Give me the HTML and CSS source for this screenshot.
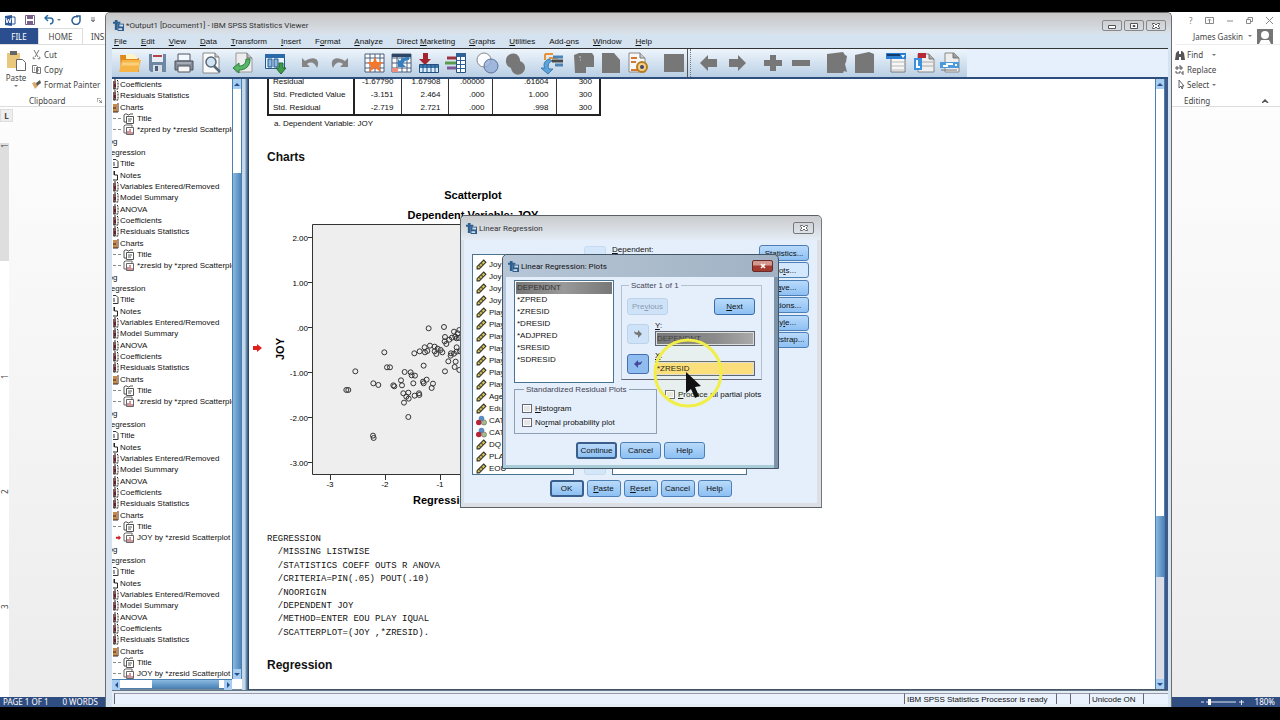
FILE: index.html
```html
<!DOCTYPE html>
<html lang="en">
<head>
<meta charset="utf-8">
<title>Output1 - IBM SPSS Statistics Viewer</title>
<link rel="stylesheet" href="styles.css">
</head>
<body>
<svg class="defs" aria-hidden="true">
  <defs>
    <symbol id="spss" viewBox="0 0 12 12"><path d="M2 0h3v2h3v2H5v7H2V4H0V2h2z" fill="#2d5f8f"/><path d="M5 4h7v8H5z" fill="#2f5b88"/><path d="M7 5h4v2H7zM6 9h4v2H6z" fill="#c9dcee"/></symbol>
    <symbol id="book" viewBox="0 0 6 11"><path d="M0 2h3v8H0z" fill="#7d5a58"/><path d="M1 1h3l1 1v8H0" fill="none" stroke="#222" stroke-dasharray="2 1"/><path d="M1 5h2v3H1z" fill="#5b2430"/></symbol>
    <symbol id="folder" viewBox="0 0 6 11"><path d="M0 2h4v8H0z" fill="#c98a48"/><path d="M0 10h5V1M0 6h3" fill="none" stroke="#3c2414"/></symbol>
    <symbol id="page" viewBox="0 0 6 11"><path d="M0 1.500h3l2 2v6H0M0 5h2M0 7h2" fill="none" stroke="#333"/></symbol>
    <symbol id="note" viewBox="0 0 6 11"><path d="M1.500 1v4h3v5H0M0 1v4" fill="none" stroke="#222"/></symbol>
    <symbol id="ctitle" viewBox="0 0 12 11"><path d="M3 9H1V2l1-1h2l1 1h1l1-1h3M3.500 3.500h7v7h-7zM5 6h4M5 8h3" fill="none" stroke="#555"/></symbol>
    <symbol id="cplot" viewBox="0 0 12 11"><path d="M3 9H1V2l1-1h7v2M3.500 3.500h7v7h-7z" fill="none" stroke="#666"/><path d="M5 10V7M7 10V5M9 10V8" stroke="#a02838"/></symbol>
    <symbol id="redarrow" viewBox="0 0 10 8"><path d="M0 2h4V0l5 4-5 4V6H0z" fill="#e0201c"/></symbol>
    <symbol id="rule" viewBox="0 0 10 10"><path d="M1 7l6-6 2 2-6 6H1z" fill="#d6c65c" stroke="#35342a"/><path d="M3 6l1 1M5 4l1 1" stroke="#333"/></symbol>
    <symbol id="balls" viewBox="0 0 11 10"><circle cx="5.500" cy="3" r="2.800" fill="#5b8fc4"/><circle cx="2.800" cy="7" r="2.800" fill="#b8233a"/><circle cx="8" cy="7" r="2.600" fill="#a8b98c" stroke="#555" stroke-width=".5"/></symbol>

    <symbol id="t-open" viewBox="0 0 24 24"><path d="M2 4h8l2 3h9v14H3z" fill="#e08a1e"/><path d="M8 3h8l4 5H8z" fill="#fff3c8"/><path d="M1 21L4 9h19l-3 12z" fill="#f7b548"/><path d="M4 13h17" stroke="#fbd07c" stroke-width="3"/></symbol>
    <symbol id="t-save" viewBox="0 0 24 24"><path d="M4 3h17v18H6l-2-2z" fill="#6d87a5"/><path d="M7 3h11v8H7z" fill="#e8eef5"/><path d="M8 5h9" stroke="#b6434a" stroke-width="2"/><path d="M8 14h9v7H8z" fill="#d8dde2"/><path d="M10 15h3v5h-3z" fill="#46617f"/></symbol>
    <symbol id="t-print" viewBox="0 0 24 24"><path d="M6 3h12v7H6z" fill="#f2f8ff" stroke="#556"/><path d="M3 10h18v9H3z" fill="#848d99" stroke="#4b535e"/><path d="M6 15h12v6H6z" fill="#f4f6f8" stroke="#555"/><path d="M5 12h14" stroke="#c3cad2"/></symbol>
    <symbol id="t-preview" viewBox="0 0 24 24"><path d="M4 2h12l4 4v16H4z" fill="#fbfbfb" stroke="#8a8a8a"/><path d="M16 2v4h4" fill="#ccc" stroke="#777"/><circle cx="12" cy="11" r="5" fill="#cfe3f3" stroke="#57687a" stroke-width="1.500"/><path d="M15 15l6 6" stroke="#57687a" stroke-width="2.500"/></symbol>
    <symbol id="t-export" viewBox="0 0 24 24"><path d="M5 2h11l5 5v14H5z" fill="#ededed" stroke="#999"/><path d="M16 2v5h5" fill="#bbb" stroke="#777"/><path d="M15 8c0 5-3 7-7 7v-3l-6 5 6 5v-3c7 0 11-4 11-11z" fill="#58b765" stroke="#2c7a3c"/></symbol>
    <symbol id="t-recall" viewBox="0 0 24 24"><path d="M2.500 3.500h19v14h-19z" fill="#e9f3fb" stroke="#23598c"/><path d="M2 3h20v4H2z" fill="#2a6aa8"/><path d="M5 8h4v8H5zM11 8h4v8h-4z" fill="#8db7dd" stroke="#23598c"/><path d="M16 12h4v5h3l-5 6-5-6h3z" fill="#3f9b4b" stroke="#236a2e"/></symbol>
    <symbol id="t-undo" viewBox="0 0 24 24"><path d="M3 7v9h8l-3-3c4-3 8-1 10 4 4-9-3-13-12-7z" fill="#858585"/></symbol>
    <symbol id="t-redo" viewBox="0 0 24 24"><path d="M21 7v9h-8l3-3c-4-3-8-1-10 4-4-9 3-13 12-7z" fill="#858585"/></symbol>
    <symbol id="t-star" viewBox="0 0 24 24"><path d="M2 3h19v18H2z" fill="#fff"/><path d="M2 3h19v18H2zM2 7h19M2 12h19M2 17h19M7 3v18M12 3v18M17 3v18" fill="none" stroke="#4b5e7c"/><path d="M12 6l2 5h6l-4 4 2 6-6-4-6 4 2-6-4-4h6z" fill="#f4772c"/></symbol>
    <symbol id="t-goto" viewBox="0 0 24 24"><path d="M2 3h19v18H2z" fill="#fff"/><path d="M2 3h19v18H2zM2 7h19M2 12h19M2 17h19M7 3v18M12 3v18M17 3v18" fill="none" stroke="#4b5e7c"/><path d="M2 3h19v3H2z" fill="#2d4566"/><path d="M19 6c-6 0-8 2-9 4L8 8v8h8l-3-3c1-3 3-4 6-4z" fill="#347fc0"/><path d="M2 17h6v4H2z" fill="#f08c7a"/></symbol>
    <symbol id="t-var" viewBox="0 0 24 24"><path d="M6 2h5v6h3l-6 6-6-6h4z" fill="#a3242f"/><path d="M2.500 13.500h19v8h-19z" fill="#d8edff" stroke="#234f7c"/><path d="M3 14h18v3H3z" fill="#3c78b2"/><path d="M6 14v8M10 14v8M14 14v8M18 14v8" stroke="#234f7c"/></symbol>
    <symbol id="t-vars" viewBox="0 0 24 24"><path d="M12.500 2.500h9v19h-9z" fill="#fff" stroke="#234f7c"/><path d="M12 2h10v4H12zM12 9h10v1H12zM12 13h10v1H12zM12 17h10v1H12zM16 2h1v20h-1z" fill="#2f6299"/><path d="M3 7h9" stroke="#9b3540" stroke-width="3"/><path d="M1 12h11" stroke="#5d9b4c" stroke-width="3"/><path d="M3 17h9" stroke="#7e5a94" stroke-width="3"/></symbol>
    <symbol id="t-venn" viewBox="0 0 24 24"><circle cx="8" cy="9" r="7" fill="#fafcff" stroke="#888"/><circle cx="15" cy="15" r="7" fill="#93add8" fill-opacity=".8" stroke="#5b739c"/></symbol>
    <symbol id="t-venng" viewBox="0 0 24 24"><path d="M2 9a7 7 0 0 1 13-3 7 7 0 0 1 1 4 7 7 0 1 1-9 7 7 7 0 0 1-5-8z" fill="#777"/></symbol>
    <symbol id="t-split" viewBox="0 0 24 24"><path d="M5 3h8M5 3v6M9 7h9" stroke="#e69336" stroke-width="2" fill="none"/><path d="M13 6h10M15 14h8" stroke="#4c83b7" stroke-width="3"/><path d="M12 10h11" stroke="#4a4a4a" stroke-width="3"/><path d="M9 8c-5 2-6 6-4 9H1l7 6 5-5H9c-2-4 0-7 3-8z" fill="#5ba3da" stroke="#3a7ab0"/></symbol>
    <symbol id="t-g1" viewBox="0 0 24 24"><path d="M2 4l5-2h13l2 3v11h-8v6H3z" fill="#777"/><path d="M7 6h2M8 9h1" stroke="#ccc"/></symbol>
    <symbol id="t-g2" viewBox="0 0 24 24"><path d="M3 2h12l6 7v13H3z" fill="#777"/></symbol>
    <symbol id="t-run" viewBox="0 0 24 24"><path d="M3 2h11l5 5v14H3z" fill="#f7f7f7" stroke="#888"/><path d="M14 2v5h5" fill="#ccc" stroke="#777"/><path d="M5 7h6M5 11h5M5 19h8" stroke="#d57734" stroke-width="2"/><circle cx="16" cy="16" r="5" fill="#f4d28a" stroke="#b87a1e" stroke-width="2"/><circle cx="16" cy="16" r="2" fill="#446"/></symbol>
    <symbol id="t-g3" viewBox="0 0 24 24"><path d="M2 3h20v18H2z" fill="#777"/></symbol>
    <symbol id="t-left" viewBox="0 0 24 24"><path d="M3 12l8-8v4h9v8h-9v4z" fill="#777"/></symbol>
    <symbol id="t-right" viewBox="0 0 24 24"><path d="M21 12l-8-8v4H4v8h9v4z" fill="#777"/></symbol>
    <symbol id="t-plus" viewBox="0 0 24 24"><path d="M9 4h6v5h6v6h-6v5H9v-5H3V9h6z" fill="#777"/></symbol>
    <symbol id="t-minus" viewBox="0 0 24 24"><path d="M3 9h18v6H3z" fill="#777"/></symbol>
    <symbol id="t-g4" viewBox="0 0 24 24"><path d="M2 3l16-2 2 3 2 1-1 6-1 2 2 8-3-1-1 2H2z" fill="#777"/></symbol>
    <symbol id="t-g5" viewBox="0 0 24 24"><path d="M2 4l14-3 5 2v19H2z" fill="#777"/></symbol>
    <symbol id="t-head" viewBox="0 0 24 24"><path d="M6 7h14v14H6z" fill="#f6f6f6" stroke="#777"/><path d="M7 11h13M7 15h13M7 19h13" stroke="#bbb"/><path d="M1 2h20v6H1z" fill="#2a7fd0"/><path d="M2 4h13" stroke="#123a6b" stroke-width="2"/><path d="M16 4h4l-2 3z" fill="#fff"/></symbol>
    <symbol id="t-rep" viewBox="0 0 24 24"><path d="M6 3h11l5 5v13H6z" fill="#efefef" stroke="#888"/><path d="M6 2h8v5H6z" fill="#b92836"/><path d="M17 3v5h5" fill="#aaa" stroke="#777"/><path d="M10 11h11M10 15h11" stroke="#aaa"/><path d="M2 7h8v12H2z" fill="#3c90dc"/><path d="M5 9v7h3" stroke="#fff" fill="none" stroke-width="2"/></symbol>
    <symbol id="t-pic" viewBox="0 0 24 24"><path d="M6 2h9l5 5v14H6z" fill="#eee" stroke="#888"/><path d="M14 2v5h6" fill="#999" stroke="#777"/><path d="M1 11h19v6H1z" fill="#4b9ade"/><path d="M4 15h4v-2h6M16 14h2" stroke="#fff" stroke-width="2" fill="none"/><path d="M2 19h16" stroke="#777"/></symbol>
  </defs>
</svg>

<main class="desktop">
  <!-- Word, behind everything -->
  <section class="word" aria-label="Word">
    <div class="word-top">
      <div class="word-left">
        <div class="quick">
          <svg width="11" height="11" viewBox="0 0 11 11"><path d="M0 1l7-1v11l-7-1z" fill="#2b579a"/><path d="M7 2h3v7H7" fill="#fff" stroke="#2b579a"/><path d="M1 3l1 5 1.500-4L5 8l1-5" fill="none" stroke="#fff"/></svg>
          <svg width="10" height="10" viewBox="0 0 10 10"><path d="M.5.5h9v9h-9z" fill="#fff" stroke="#77608a"/><path d="M2 1h6v3H2zM2 6h6v4H2z" fill="#77608a"/></svg>
          <svg width="18" height="10" viewBox="0 0 18 10"><path d="M4 0L1 3l3 3M1 3h5c4 0 4 5 0 6" fill="none" stroke="#2b6da8" stroke-width="1.500"/><path d="M13 4h4l-2 2z" fill="#777"/></svg>
          <svg width="10" height="10" viewBox="0 0 10 10"><path d="M7 2a4 4 0 1 0 2 3M5 1h4v4" fill="none" stroke="#2b5f94" stroke-width="1.500"/></svg>
          <svg width="6" height="6" viewBox="0 0 6 6"><path d="M1 1h4M1 3h4L3 5z" stroke="#888" fill="#888"/></svg>
        </div>
        <div class="tabs"><button class="tab file">FILE</button><button class="tab home">HOME</button><button class="tab insert">INSERT</button></div>
        <div class="ribbon">
          <div class="clip-row">
            <button class="paste"><svg width="20" height="21" viewBox="0 0 20 21"><path d="M1 3h13v15H1z" fill="#e9c77c"/><path d="M4 1h7v4H4z" fill="#666"/><path d="M10.500 9.500h6l3 3v8h-9z" fill="#fff" stroke="#666"/></svg><span>Paste</span><svg width="6" height="4" viewBox="0 0 6 4"><path d="M1 1h4L3 3z" fill="#777"/></svg></button>
            <div class="clip-list">
              <button><svg width="11" height="10" viewBox="0 0 11 10"><path d="M3 0l4 7M8 0L4 7M3 7a1 1 0 1 0 1 1M8 7a1 1 0 1 1-1 1" fill="none" stroke="#777"/></svg>Cut</button>
              <button><svg width="11" height="10" viewBox="0 0 11 10"><path d="M1.500.5h4l1 1v6h-5zM5.500 2.500h4v6h-4zM3 3h1M3 5h1M7 5h1" fill="none" stroke="#777"/></svg>Copy</button>
              <button><svg width="11" height="10" viewBox="0 0 11 10"><path d="M1 3l3-1 3 4-3 3z" fill="#d9a96a"/><path d="M5 3l4-3 1 3-4 3z" fill="#555"/></svg>Format Painter</button>
            </div>
          </div>
          <div class="group-name"><span>Clipboard</span><svg width="5" height="5" viewBox="0 0 5 5"><path d="M0 4V0h4M2 2l3 3M5 2v3H2" fill="none" stroke="#777"/></svg></div>
        </div>
      </div>
      <div class="word-right">
        <div class="win-tools">
          <span>?</span>
          <svg width="9" height="7" viewBox="0 0 9 7"><path d="M.5.5h8v6h-8zM4.500 6V2M3 3.500L4.500 2 6 3.500" fill="none" stroke="#888"/></svg>
          <svg width="7" height="7" viewBox="0 0 7 7"><path d="M0 4h6" stroke="#888"/></svg>
          <svg width="7" height="7" viewBox="0 0 7 7"><path d="M.5 2.500h4v4h-4zM2 2V.5h4.500v4H5" fill="none" stroke="#888"/></svg>
          <svg width="7" height="7" viewBox="0 0 7 7"><path d="M0 0l7 7M7 0L0 7" stroke="#888"/></svg>
        </div>
        <div class="user"><span>James Gaskin</span><svg width="6" height="4" viewBox="0 0 6 4"><path d="M1 1h4L3 3z" fill="#777"/></svg><svg width="16" height="15" viewBox="0 0 16 15"><path d="M0 0h16v15H0z" fill="#757575"/><circle cx="8" cy="6" r="4" fill="#fff"/><path d="M2 15l2-4h8l2 4z" fill="#fff"/></svg></div>
        <div class="editing">
          <button><svg width="10" height="9" viewBox="0 0 10 9"><path d="M1 2l2-2h1v9H0zM9 2L7 0H6v9h4zM4 3h2v3H4z" fill="#555"/></svg>Find<svg width="14" height="4" viewBox="0 0 14 4"><path d="M7 1h4L9 3z" fill="#777"/></svg></button>
          <button><svg width="10" height="10" viewBox="0 0 10 10"><path d="M1 4V2h2v2zM5 0v4h2V2H5M4 9V7h2M9 7H7v2h2M1 6v2h2" fill="none" stroke="#555"/></svg>Replace</button>
          <button><svg width="10" height="10" viewBox="0 0 10 10"><path d="M4 0v8l2-2 1 3 1-1-1-2h2z" fill="#fff" stroke="#666"/></svg>Select<svg width="6" height="4" viewBox="0 0 6 4"><path d="M1 1h4L3 3z" fill="#777"/></svg></button>
          <div class="group-name right"><span>Editing</span><svg width="7" height="4" viewBox="0 0 7 4"><path d="M0 4l3-3 3 3" fill="none" stroke="#555" stroke-width="1.500"/></svg></div>
        </div>
      </div>
    </div>
    <div class="word-body">
      <div class="tabstop">L</div>
      <div class="vruler"><span class="mark m1">1</span><span class="mark m2">1</span><span class="mark m3">2</span><span class="mark m4">3</span></div>
    </div>
    <div class="word-status"><span>PAGE 1 OF 1</span><span class="words">0 WORDS</span><span class="zoombar"><svg width="46" height="8" viewBox="0 0 46 8"><path d="M0 4h3M5 4h30M38 4h5M40.500 2v5" stroke="#dfe7f3"/><path d="M7 1h3v6H7z" fill="#fff"/></svg><span>180%</span></span></div>
  </section>

  <!-- Statistics viewer -->
  <section class="viewer" aria-label="IBM SPSS Statistics Viewer">
    <header class="titlebar">
      <svg width="11" height="11"><use href="#spss"/></svg><h1>*Output1 [Document1] - IBM SPSS Statistics Viewer</h1>
      <div class="winbtns">
        <button aria-label="Minimize"><svg width="8" height="6" viewBox="0 0 8 6"><path d="M.5 2.500h7v3h-7z" fill="#fff" stroke="#555"/></svg></button><button aria-label="Maximize"><svg width="8" height="6" viewBox="0 0 8 6"><path d="M.5.5h7v5h-7zM3 2.500h2v1H3z" fill="#fff" stroke="#555"/></svg></button><button aria-label="Close"><svg width="8" height="6" viewBox="0 0 8 6"><path d="M.5.5h2L4 2 5.500.5h2v1L6 3l1.500 1.500v1h-2L4 4 2.500 5.500h-2v-1L2 3 .5 1.500z" fill="#fff" stroke="#555"/></svg></button>
      </div>
    </header>
    <nav class="menubar">
      <button><u>F</u>ile</button><button><u>E</u>dit</button><button><u>V</u>iew</button><button><u>D</u>ata</button><button><u>T</u>ransform</button><button><u>I</u>nsert</button><button>F<u>o</u>rmat</button><button><u>A</u>nalyze</button><button>Direct <u>M</u>arketing</button><button><u>G</u>raphs</button><button><u>U</u>tilities</button><button>Add-<u>o</u>ns</button><button><u>W</u>indow</button><button><u>H</u>elp</button>
    </nav>
    <div class="toolbar">
      <div class="grp"><button aria-label="Open"><svg><use href="#t-open"/></svg></button><button aria-label="Save"><svg><use href="#t-save"/></svg></button><button aria-label="Print"><svg><use href="#t-print"/></svg></button><button aria-label="Preview"><svg><use href="#t-preview"/></svg></button></div>
      <div class="grp"><button aria-label="Export"><svg><use href="#t-export"/></svg></button></div>
      <div class="grp"><button aria-label="Recall"><svg><use href="#t-recall"/></svg></button></div>
      <div class="grp far pair"><button aria-label="Undo"><svg><use href="#t-undo"/></svg></button><button aria-label="Redo"><svg><use href="#t-redo"/></svg></button></div>
      <div class="grp far"><button aria-label="Go to data"><svg><use href="#t-star"/></svg></button><button aria-label="Go to case"><svg><use href="#t-goto"/></svg></button><button aria-label="Go to variable"><svg><use href="#t-var"/></svg></button><button aria-label="Variables"><svg><use href="#t-vars"/></svg></button></div>
      <div class="grp pair"><button aria-label="Use sets"><svg><use href="#t-venn"/></svg></button><button aria-label="Show all"><svg><use href="#t-venng"/></svg></button></div>
      <div class="grp far"><button aria-label="Select last output"><svg><use href="#t-split"/></svg></button></div>
      <div class="grp"><button aria-label="Designate window"><svg><use href="#t-g1"/></svg></button><button aria-label="Autoscript"><svg><use href="#t-g2"/></svg></button><button aria-label="Run script"><svg><use href="#t-run"/></svg></button></div>
      <div class="grp far"><button aria-label="Window"><svg><use href="#t-g3"/></svg></button></div>
      <div class="sep"></div>
      <div class="grp pair"><button aria-label="Promote"><svg><use href="#t-left"/></svg></button><button aria-label="Demote"><svg><use href="#t-right"/></svg></button></div>
      <div class="grp far pair"><button aria-label="Expand"><svg><use href="#t-plus"/></svg></button><button aria-label="Collapse"><svg><use href="#t-minus"/></svg></button></div>
      <div class="grp far pair"><button aria-label="Show"><svg><use href="#t-g4"/></svg></button><button aria-label="Hide"><svg><use href="#t-g5"/></svg></button></div>
      <div class="grp"><button aria-label="Insert heading"><svg><use href="#t-head"/></svg></button><button aria-label="Insert title"><svg><use href="#t-rep"/></svg></button><button aria-label="Insert text"><svg><use href="#t-pic"/></svg></button></div>
    </div>

    <div class="panes">
      <aside class="outline">
        <ul class="tree">
          <li><svg><use href="#book"/></svg>Coefficients</li>
          <li><svg><use href="#book"/></svg>Residuals Statistics</li>
          <li><svg><use href="#folder"/></svg>Charts</li>
          <li class="leaf"><svg><use href="#ctitle"/></svg>Title</li>
          <li class="leaf"><svg><use href="#cplot"/></svg>*zpred by *zresid Scatterplot</li>
          <li class="log">Log</li>
          <li class="reg">Regression</li>
          <li><svg><use href="#page"/></svg>Title</li>
          <li><svg><use href="#note"/></svg>Notes</li>
          <li><svg><use href="#book"/></svg>Variables Entered/Removed</li>
          <li><svg><use href="#book"/></svg>Model Summary</li>
          <li><svg><use href="#book"/></svg>ANOVA</li>
          <li><svg><use href="#book"/></svg>Coefficients</li>
          <li><svg><use href="#book"/></svg>Residuals Statistics</li>
          <li><svg><use href="#folder"/></svg>Charts</li>
          <li class="leaf"><svg><use href="#ctitle"/></svg>Title</li>
          <li class="leaf"><svg><use href="#cplot"/></svg>*zresid by *zpred Scatterplot</li>
          <li class="log">Log</li>
          <li class="reg">Regression</li>
          <li><svg><use href="#page"/></svg>Title</li>
          <li><svg><use href="#note"/></svg>Notes</li>
          <li><svg><use href="#book"/></svg>Variables Entered/Removed</li>
          <li><svg><use href="#book"/></svg>Model Summary</li>
          <li><svg><use href="#book"/></svg>ANOVA</li>
          <li><svg><use href="#book"/></svg>Coefficients</li>
          <li><svg><use href="#book"/></svg>Residuals Statistics</li>
          <li><svg><use href="#folder"/></svg>Charts</li>
          <li class="leaf"><svg><use href="#ctitle"/></svg>Title</li>
          <li class="leaf"><svg><use href="#cplot"/></svg>*zresid by *zpred Scatterplot</li>
          <li class="log">Log</li>
          <li class="reg">Regression</li>
          <li><svg><use href="#page"/></svg>Title</li>
          <li><svg><use href="#note"/></svg>Notes</li>
          <li><svg><use href="#book"/></svg>Variables Entered/Removed</li>
          <li><svg><use href="#book"/></svg>Model Summary</li>
          <li><svg><use href="#book"/></svg>ANOVA</li>
          <li><svg><use href="#book"/></svg>Coefficients</li>
          <li><svg><use href="#book"/></svg>Residuals Statistics</li>
          <li><svg><use href="#folder"/></svg>Charts</li>
          <li class="leaf"><svg><use href="#ctitle"/></svg>Title</li>
          <li class="leaf current"><svg><use href="#cplot"/></svg>JOY by *zresid Scatterplot</li>
          <li class="log">Log</li>
          <li class="reg">Regression</li>
          <li><svg><use href="#page"/></svg>Title</li>
          <li><svg><use href="#note"/></svg>Notes</li>
          <li><svg><use href="#book"/></svg>Variables Entered/Removed</li>
          <li><svg><use href="#book"/></svg>Model Summary</li>
          <li><svg><use href="#book"/></svg>ANOVA</li>
          <li><svg><use href="#book"/></svg>Coefficients</li>
          <li><svg><use href="#book"/></svg>Residuals Statistics</li>
          <li><svg><use href="#folder"/></svg>Charts</li>
          <li class="leaf"><svg><use href="#ctitle"/></svg>Title</li>
          <li class="leaf"><svg><use href="#cplot"/></svg>JOY by *zresid Scatterplot</li>
        </ul>
        <div class="vscroll"><button class="arrow up" aria-label="Up"></button><div class="vtrack a"></div><div class="vthumb a"></div><button class="arrow down" aria-label="Down"></button></div>
        <div class="hscroll"><button class="arrow left" aria-label="Left"></button><div class="htrack"></div><div class="hthumb"></div><div class="hend"></div><button class="arrow right" aria-label="Right"></button></div>
      </aside>
      <div class="splitter"></div>
      <article class="output">
        <div class="doc">
          <table class="stats">
            <tr><th>Residual</th><td class="c1">-1.67790</td><td class="c2">1.67908</td><td class="c3">.00000</td><td class="c4">.61604</td><td class="c3">300</td></tr>
            <tr><th>Std. Predicted Value</th><td>-3.151</td><td>2.464</td><td>.000</td><td>1.000</td><td>300</td></tr>
            <tr><th>Std. Residual</th><td>-2.719</td><td>2.721</td><td>.000</td><td>.998</td><td>300</td></tr>
          </table>
          <p class="foot">a. Dependent Variable: JOY</p>
          <h2>Charts</h2>
          <div class="chart">
            <svg class="here" width="10" height="8"><use href="#redarrow"/></svg>
            <svg class="plot" viewBox="267 185 413 325" width="413" height="325">
              <text class="ct" x="473" y="199">Scatterplot</text>
              <text class="ct" x="473" y="219">Dependent Variable: JOY</text>
              <path d="M312.500 224.500h330v250h-330z" fill="#eee" stroke="#333"/>
              <path d="M308 237.500h4M308 282.500h4M308 327.500h4M308 372.500h4M308 417.500h4M308 462.500h4M330.500 475v5M385.500 475v5M440.500 475v5" stroke="#333"/>
              <g class="tick y"><text x="308" y="241">2.00</text><text x="308" y="286">1.00</text><text x="308" y="331">.00</text><text x="308" y="376">-1.00</text><text x="308" y="421">-2.00</text><text x="308" y="466">-3.00</text></g>
              <g class="tick x"><text x="330" y="487">-3</text><text x="385" y="487">-2</text><text x="440" y="487">-1</text></g>
              <text class="ct" transform="translate(284 349) rotate(-90)">JOY</text>
              <text class="cl" x="413" y="504">Regression Standardized</text>
              <g class="pts" transform="translate(255 180) scale(.3333)">
                <circle cx="521" cy="445"/><circle cx="567" cy="441"/><circle cx="388" cy="517"/><circle cx="301" cy="574"/><circle cx="396" cy="562"/><circle cx="405" cy="562"/><circle cx="355" cy="610"/><circle cx="370" cy="615"/><circle cx="274" cy="630"/><circle cx="280" cy="630"/><circle cx="415" cy="616"/><circle cx="418" cy="619"/><circle cx="438" cy="601"/><circle cx="441" cy="616"/><circle cx="449" cy="576"/><circle cx="467" cy="577"/><circle cx="470" cy="586"/><circle cx="480" cy="587"/><circle cx="475" cy="610"/><circle cx="506" cy="557"/><circle cx="478" cy="520"/><circle cx="494" cy="514"/><circle cx="509" cy="502"/><circle cx="510" cy="517"/><circle cx="517" cy="513"/><circle cx="525" cy="497"/><circle cx="539" cy="500"/><circle cx="548" cy="506"/><circle cx="557" cy="510"/><circle cx="539" cy="514"/><circle cx="544" cy="522"/><circle cx="562" cy="517"/><circle cx="445" cy="640"/><circle cx="460" cy="638"/><circle cx="454" cy="650"/><circle cx="461" cy="656"/><circle cx="447" cy="668"/><circle cx="479" cy="647"/><circle cx="492" cy="640"/><circle cx="493" cy="645"/><circle cx="504" cy="605"/><circle cx="506" cy="610"/><circle cx="515" cy="599"/><circle cx="534" cy="611"/><circle cx="530" cy="624"/><circle cx="460" cy="711"/><circle cx="354" cy="767"/><circle cx="356" cy="774"/><circle cx="570" cy="471"/><circle cx="569" cy="484"/><circle cx="574" cy="492"/><circle cx="583" cy="479"/><circle cx="591" cy="473"/><circle cx="597" cy="455"/><circle cx="601" cy="470"/><circle cx="608" cy="460"/><circle cx="613" cy="450"/><circle cx="605" cy="475"/><circle cx="611" cy="474"/><circle cx="605" cy="502"/><circle cx="605" cy="515"/><circle cx="615" cy="514"/><circle cx="588" cy="520"/><circle cx="587" cy="527"/><circle cx="597" cy="521"/><circle cx="580" cy="544"/><circle cx="602" cy="545"/><circle cx="570" cy="574"/><circle cx="599" cy="561"/><circle cx="613" cy="570"/>
              </g>
            </svg>
          </div>
          <div class="syntax"><code>REGRESSION</code><code>  /MISSING LISTWISE</code><code>  /STATISTICS COEFF OUTS R ANOVA</code><code>  /CRITERIA=PIN(.05) POUT(.10)</code><code>  /NOORIGIN</code><code>  /DEPENDENT JOY</code><code>  /METHOD=ENTER EOU PLAY IQUAL</code><code>  /SCATTERPLOT=(JOY ,*ZRESID).</code></div>
          <h2>Regression</h2>
        </div>
        <div class="vscroll main"><button class="arrow up" aria-label="Up"></button><div class="vtrack b"></div><div class="vthumb b"></div><div class="vtrack c"></div><button class="arrow down" aria-label="Down"></button></div>
      </article>
    </div>
    <footer class="status"><span class="cell grow"></span><span class="cell ready">IBM SPSS Statistics Processor is ready</span><span class="cell s"></span><span class="cell m"></span><span class="cell uni">Unicode ON</span><span class="cell e"></span></footer>
  </section>

  <!-- Linear Regression dialog -->
  <section class="dialog regression" aria-label="Linear Regression">
    <header class="dlg-title"><svg width="11" height="11"><use href="#spss"/></svg><h2>Linear Regression</h2><button class="x plain" aria-label="Close"><svg width="8" height="6" viewBox="0 0 8 6"><path d="M.5.5h2L4 2 5.500.5h2v1L6 3l1.500 1.500v1h-2L4 4 2.500 5.500h-2v-1L2 3 .5 1.500z" fill="#fff" stroke="#666"/></svg></button></header>
    <div class="reg-body">
      <ul class="vars">
        <li><svg><use href="#rule"/></svg>Joy</li><li><svg><use href="#rule"/></svg>Joy</li><li><svg><use href="#rule"/></svg>Joy</li><li><svg><use href="#rule"/></svg>Joy</li><li><svg><use href="#rule"/></svg>Play</li><li><svg><use href="#rule"/></svg>Play</li><li><svg><use href="#rule"/></svg>Play</li><li><svg><use href="#rule"/></svg>Play</li><li><svg><use href="#rule"/></svg>Play</li><li><svg><use href="#rule"/></svg>Play</li><li><svg><use href="#rule"/></svg>Play</li><li><svg><use href="#rule"/></svg>Age</li><li><svg><use href="#rule"/></svg>Edu</li><li><svg><use href="#balls"/></svg>CAT</li><li><svg><use href="#balls"/></svg>CAT</li><li><svg><use href="#rule"/></svg>DQ</li><li><svg><use href="#rule"/></svg>PLAY</li><li><svg><use href="#rule"/></svg>EOU</li>
      </ul>
      <div class="movers"><button class="ghost" aria-label="Move to dependent"></button><button class="ghost" aria-label="Move to weight"></button></div>
      <div class="dep"><span><u>D</u>ependent:</span><div class="wls"></div></div>
      <div class="side"><button class="btn"><u>S</u>tatistics...</button><button class="btn lite">Plo<u>t</u>s...</button><button class="btn">S<u>a</u>ve...</button><button class="btn">Options...</button><button class="btn">Sty<u>l</u>e...</button><button class="btn">Bootstrap...</button></div>
    </div>
    <div class="row main-row"><button class="btn def">OK</button><button class="btn"><u>P</u>aste</button><button class="btn"><u>R</u>eset</button><button class="btn">Cancel</button><button class="btn">Help</button></div>
  </section>

  <!-- Plots dialog -->
  <section class="dialog plots" aria-label="Linear Regression: Plots">
    <header class="dlg-title"><svg width="11" height="11"><use href="#spss"/></svg><h2>Linear Regression: Plots</h2><button class="x red" aria-label="Close"><svg width="8" height="6" viewBox="0 0 8 6"><path d="M2 1l4 4M6 1L2 5" stroke="#fff" stroke-width="1.500"/></svg></button></header>
    <div class="plots-body">
      <div class="col-a">
        <ul class="sources"><li class="sel">DEPENDNT</li><li>*ZPRED</li><li>*ZRESID</li><li>*DRESID</li><li>*ADJPRED</li><li>*SRESID</li><li>*SDRESID</li></ul>
        <fieldset class="std"><legend>Standardized Residual Plots</legend>
          <label><input type="checkbox"><span><u>H</u>istogram</span></label>
          <label><input type="checkbox"><span>No<u>r</u>mal probability plot</span></label>
        </fieldset>
      </div>
      <div class="col-b">
        <fieldset class="scatter"><legend>Scatter 1 of 1</legend>
          <div class="pager"><button class="btn off" disabled>Pre<u>v</u>ious</button><button class="btn def2"><u>N</u>ext</button></div>
          <div class="axis"><button class="mv pale" aria-label="Move to Y"><svg width="10" height="8" viewBox="0 0 10 8"><path d="M1 1c0 3 2 4 4 4v3l4-4-4-4v2C3 3 2 2 1 1z" fill="#777"/></svg></button><div><label for="fy"><u>Y</u>:</label><input id="fy" class="fy" value="DEPENDNT" readonly></div></div>
          <div class="axis"><button class="mv" aria-label="Remove from X"><svg width="10" height="8" viewBox="0 0 10 8"><path d="M9 1c0 3-2 4-4 4v3L1 4l4-4v2c2 1 3 0 4-1z" fill="#4a4a9c"/></svg></button><div><label for="fx"><u>X</u>:</label><input id="fx" class="fx" value="*ZRESID"></div></div>
        </fieldset>
        <label class="partial"><input type="checkbox"><span><u>P</u>roduce all partial plots</span></label>
      </div>
    </div>
    <div class="row plots-row"><button class="btn def">Continue</button><button class="btn">Cancel</button><button class="btn">Help</button></div>
  </section>

  <svg class="pointer" width="70" height="70" viewBox="0 0 70 70" aria-hidden="true"><circle cx="35" cy="35" r="33" fill="#ffff60" fill-opacity=".08" stroke="#f1ee45" stroke-width="3"/><path d="M33 34v21l5-4 4 9 4-2-4-9 6-1z" fill="#111"/></svg>
</main>
</body>
</html>
```
FILE: styles.css
```css
* { box-sizing: border-box; }
html, body { height: 100%; }
body { margin: 0; padding: 12px 0 13px; background: #000; display: flex; overflow: hidden; font: 8px/11px "Liberation Sans", Arial, sans-serif; color: #111; }
button, input { font: inherit; color: inherit; margin: 0; padding: 0; }
button { border: 0; background: none; }
ul { list-style: none; margin: 0; padding: 0; }
h1, h2, p { margin: 0; }
svg { flex: none; display: block; }
.defs { position: absolute; width: 0; height: 0; }
.desktop { flex: 1; position: relative; overflow: hidden; background: #fff; }

/* Word */
.word { height: 100%; display: flex; flex-direction: column; font-family: "Noto Sans", sans-serif; color: #444; }
.word-top { display: flex; justify-content: space-between; height: 95px; flex: none; border-bottom: 1px solid #ddd; }
.word-left { width: 180px; }
.quick { display: flex; align-items: center; gap: 9px; height: 16px; padding-left: 5px; }
.tabs { display: flex; height: 17px; border-bottom: 1px solid #ddd; }
.tab { width: 43px; }
.tab.file { width: 38px; background: #2b4f8e; color: #fff; }
.tab.home { width: 45px; background: #fff; border: 1px solid #ddd; border-bottom: 0; }
.ribbon { padding-top: 2px; }
.clip-row { display: flex; gap: 6px; height: 46px; }
.paste { width: 26px; margin-left: 3px; display: flex; flex-direction: column; align-items: center; gap: 1px; padding-top: 3px; }
.clip-list { display: flex; flex-direction: column; justify-content: space-around; align-items: flex-start; margin-left: -4px; }
.clip-list button, .editing button { display: flex; align-items: center; gap: 2px; line-height: 10px; }
.group-name { display: flex; align-items: center; justify-content: space-between; width: 73px; margin-left: 29px; padding-top: 2px; }
.word-right { width: 105px; }
.win-tools { display: flex; justify-content: space-between; align-items: center; height: 16px; padding: 0 7px 0 14px; color: #777; }
.user { display: flex; align-items: center; justify-content: flex-end; gap: 4px; height: 17px; padding-right: 7px; border-bottom: 1px solid #eee; }
.editing { display: flex; flex-direction: column; gap: 5px; padding-top: 5px; align-items: flex-start; }
.editing .group-name { width: 85px; margin-left: 9px; padding: 0; }
.word-body { flex: 1; min-height: 0; display: flex; flex-direction: column; background: linear-gradient(#fdfdfd, #ececec); padding-top: 2px; }
.tabstop { width: 13px; height: 13px; flex: none; border: 1px solid #ddd; background: #eee; font-weight: bold; text-align: center; line-height: 11px; }
.vruler { width: 9px; flex: 1; min-height: 0; margin-top: 21px; display: flex; flex-direction: column; background: linear-gradient(#dedede 118px, #fff 118px); }
.mark { height: 115px; flex: none; writing-mode: vertical-rl; transform: rotate(180deg); text-align: right; line-height: 9px; }
.mark.m1 { height: 231px; }
.mark.m4 { height: 23px; }
.word-status { height: 10px; flex: none; line-height: 10px; background: #2f4d80; color: #fff; display: flex; align-items: center; padding: 0 5px 0 3px; gap: 14px; }
.zoombar { margin-left: auto; display: flex; align-items: center; gap: 8px; }

/* Viewer window */
.viewer { position: absolute; inset: 0 108px 0 105px; display: flex; flex-direction: column; border: 1px solid #6c6c6c; border-bottom: 0; border-radius: 5px 5px 0 0; background: #d5e2ef; padding: 0 3px 0 6px; }
.titlebar { height: 21px; margin: 0 -3px 0 -6px; padding: 4px 5px 0 7px; display: flex; align-items: center; gap: 2px; background: linear-gradient(#c6c6c6, #d9e1e9); border-radius: 5px 5px 0 0; }
.titlebar h1 { font: 8px/11px Roboto, sans-serif; color: #333; }
.winbtns { margin-left: auto; display: flex; gap: 2px; }
.winbtns button { width: 20px; height: 11px; border: 1px solid #888; border-radius: 2px; display: flex; align-items: center; justify-content: center; }
.menubar { height: 14px; display: flex; align-items: center; gap: 14px; padding-left: 2px; }
.toolbar { height: 31px; display: flex; align-items: center; gap: 8px; padding-left: 6px; border-top: 1px solid #333; border-bottom: 2px solid #2d4d7c; background: linear-gradient(90deg, transparent 855px, #e6f0fc 855px), linear-gradient(#eef5fc, #b9cfe4); }
.grp { display: flex; gap: 3px; }
.grp.pair { gap: 4px; }
.grp.far { margin-left: 4px; }
.grp svg, .grp button { width: 24px; height: 24px; }
.sep { width: 4px; height: 28px; border-left: 1px solid #555; border-right: 1px dotted #777; margin: 0 -2px 0 -7px; }
.panes { flex: 1; min-height: 0; display: flex; }
.outline { width: 130px; display: grid; grid-template-columns: 120px 10px; grid-template-rows: minmax(0, 1fr) 10px; background: #fff; border-bottom: 1px solid #789; }
.tree { display: flex; flex-direction: column; overflow: hidden; padding-left: 1px; }
.tree li { flex: 1; min-height: 0; display: flex; align-items: center; gap: 1px; white-space: nowrap; }
.tree svg { width: 6px; height: 11px; }
.tree .log { text-indent: -9px; }
.tree .reg { text-indent: -8px; }
.tree .leaf { gap: 2px; }
.tree .leaf svg { width: 12px; }
.tree .leaf::before { content: ""; flex: none; width: 8px; border-top: 1px dashed #888; }
.tree .current::before { background: #d0202a; height: 5px; border: 0; width: 5px; margin-left: 3px; clip-path: polygon(0 30%, 50% 30%, 50% 0, 100% 50%, 50% 100%, 50% 70%, 0 70%); }
.vscroll { display: flex; flex-direction: column; border: 1px solid #4a7fb0; border-width: 0 1px; background: #e8edf3; }
.arrow { width: 8px; height: 10px; background: #a9cdf0; display: flex; align-items: center; justify-content: center; flex: none; }
.arrow::before { content: ""; border: 3px solid transparent; }
.arrow.up::before { border-top: 0; border-bottom-color: #234f8a; }
.arrow.down::before { border-bottom: 0; border-top-color: #234f8a; }
.arrow.left::before { border-left: 0; border-right-color: #234f8a; }
.arrow.right::before { border-right: 0; border-left-color: #234f8a; }
.vtrack.a { flex: 84; background: #fff; }
.vthumb { background: linear-gradient(90deg, #8ab9e0, #4c85b8); }
.vthumb.a { flex: 496; }
.hscroll { display: flex; border: 1px solid #4a7fb0; border-width: 1px 0; }
.htrack { flex: 30; background: #fff; }
.hthumb { flex: 64; background: linear-gradient(#8ab9e0, #4c85b8); }
.hend { flex: 5; background: #fff; }
.splitter { width: 7px; background: linear-gradient(90deg, #c5d8ea 40%, #6f93b5 60%, #1c3454); }
.output { flex: 1; min-width: 0; display: flex; background: #fff; border-right: 3px solid #3d5a8a; border-bottom: 1px solid #456; }
.doc { flex: 1; min-width: 0; overflow: hidden; padding-left: 18px; }
.vscroll.main { width: 10px; }
.vtrack.b { flex: 427; background: #fff; }
.vthumb.b { flex: 61; }
.vtrack.c { flex: 102; background: #dcdde6; }
.stats { border-collapse: collapse; border: 2px solid #222; margin: -6px 0 0; table-layout: fixed; width: 334px; }
.stats th, .stats td { padding: 0 7px 0 4px; height: 13px; font-weight: normal; text-align: right; border-left: 1px solid #333; }
.stats tr + tr > * { height: 14px; }
.stats th { text-align: left; width: 86px; padding-right: 0; white-space: nowrap; }
.stats td:nth-child(2) { border-left: 2px solid #222; }
.c1, .c2 { width: 47px; }
.c3 { width: 44px; }
.c4 { width: 64px; }
.foot { padding: 2px 0 0 7px; }
.doc h2 { font: bold 12px/14px "Liberation Sans", Arial, sans-serif; }
.foot + h2 { margin-top: 21px; }
.chart { margin-top: 21px; display: flex; align-items: center; margin-left: -14px; gap: 4px; }
.plot text { font-size: 8px; }
.plot .ct, .plot .cl { font: bold 11px "Liberation Sans", Arial, sans-serif; text-anchor: middle; }
.plot .cl { text-anchor: start; }
.plot .tick { text-anchor: end; }
.plot .tick.x { text-anchor: middle; }
.pts circle { r: 7.5px; fill: none; stroke: #333; stroke-width: 3; }
.syntax { display: grid; grid-auto-rows: 1fr; height: 107px; margin-top: 23px; }
.syntax code { font: 9px/13px "Liberation Mono", monospace; white-space: pre; }
.syntax + h2 { margin-top: 18px; }
.status { height: 17px; display: flex; padding: 2px 0 3px 2px; background: #e4ecf4; border-top: 1px solid #678; }
.cell { border-left: 1px solid #667; border-top: 1px solid #99a; background: #e9f2fd; padding-left: 2px; white-space: nowrap; }
.grow { flex: 1; }
.ready { width: 152px; }
.s { width: 14px; }
.m { width: 19px; }
.uni { width: 54px; }
.e { width: 25px; }

/* Dialogs */
.dialog { position: absolute; border: 1px solid #5a6066; border-radius: 5px 5px 0 0; background: #e5effb; }
.dlg-title { display: flex; align-items: center; gap: 2px; border-radius: 5px 5px 0 0; }
.dlg-title h2 { font: 8px/11px Roboto, sans-serif; color: #333; }
.x { margin-left: auto; width: 21px; height: 12px; border: 1px solid #777; border-radius: 2px; display: flex; align-items: center; justify-content: center; }
.red { background: linear-gradient(#d5988f 40%, #a33a30 50%); border-color: #6a2a28; }
.btn { height: 17px; border: 1px solid #4b7fb5; border-radius: 3px; background: linear-gradient(#b9dafa, #8dc0f3); padding: 0 2px; white-space: nowrap; }
.btn.lite { background: #d3e8fd; }
.btn.def { border: 2px solid #3a5f8c; padding: 0; }
.btn.off { background: #cfe3f8; color: #8a9cb0; border-color: #bcd3ea; }
.row { display: grid; gap: 3px; }
.regression { left: 460px; top: 203px; width: 362px; border-right: 1px solid #777; box-shadow: inset -4px 0 #dcdfe3, inset 3px 0 #d8e0ea, inset 0 -4px #dcdfe3; }
.regression .dlg-title { height: 24px; padding: 0 7px 0 5px; background: linear-gradient(#c9cbcd, #e5ecf5); }
.reg-body { display: flex; padding: 4px 12px 0 11px; height: 235px; }
.vars { width: 102px; border: 1px solid #4a7391; background: #fff; padding-top: 3px; margin-top: 10px; overflow: hidden; }
.vars li { display: flex; align-items: center; height: 12px; gap: 2px; padding-left: 3px; }
.vars svg { width: 11px; height: 11px; }
.movers { width: 22px; margin: 2px 6px 0 10px; display: flex; flex-direction: column; justify-content: space-between; }
.ghost { height: 20px; border: 1px solid #c6dbf0; border-radius: 3px; background: #d3e6fa; }
.dep { width: 135px; display: flex; flex-direction: column; justify-content: space-between; }
.wls { height: 18px; border: 1px solid #4a7391; background: #fff; }
.side { margin: 1px 0 0 auto; width: 50px; height: 103px; display: flex; flex-direction: column; justify-content: space-between; }
.side .btn { height: 16px; padding: 0; }
.main-row { grid-template-columns: repeat(5, 34px); justify-content: center; padding: 5px 0 10px; margin-right: 1px; }
.plots { left: 502px; top: 242px; width: 277px; border: 1px solid #445566; box-shadow: inset -4px 0 #7d93a8, inset 0 -3px #a9cdd8, inset 3px 0 #b6c6d8; }
.plots .dlg-title { height: 22px; padding: 0 5px; background: linear-gradient(90deg, #b7c6d6, #a0b2c4); }
.plots .dlg-title h2 { color: #111; }
.plots-body { display: flex; gap: 7px; padding: 3px 16px 0 11px; }
.col-a { width: 100px; }
.sources { border: 1px solid #4a7391; background: #fff; height: 103px; padding: 1px; }
.sources li { height: 12px; padding-left: 1px; line-height: 12px; }
.sources .sel { background: linear-gradient(90deg, #777, #999 50%, #777); color: #333; }
fieldset { margin: 0; border: 1px solid #8fa0b2; min-width: 0; padding: 0; }
legend { padding: 0 2px; margin-left: 2px; color: #445; white-space: nowrap; }
.std { width: 143px; margin-top: 1px; height: 50px; padding: 8px 0 0 7px; display: flex; flex-direction: column; gap: 3px; }
.std label, .partial { display: flex; align-items: center; gap: 3px; white-space: nowrap; }
input[type="checkbox"] { appearance: none; width: 10px; height: 9px; border: 1px solid #667; background: #e6e6e6; box-shadow: inset 0 0 0 1px #fff; }
.col-b { flex: 1; }
.scatter { height: 100px; padding: 7px 6px 0 5px; border-color: #b3c0cf; border-bottom-color: #667; }
.pager { display: flex; justify-content: space-between; }
.pager .btn { width: 41px; }
.def2 { border-color: #386ea5; }
.axis { display: flex; align-items: center; gap: 6px; margin-top: 6px; }
.axis + .axis { margin-top: 5px; }
.axis > div { flex: 1; display: flex; flex-direction: column; }
.axis label { line-height: 10px; }
.axis input { width: 100%; height: 15px; border: 1px solid #5d6570; padding: 0 1px; outline: 0; box-shadow: inset 0 0 0 1px #ddd; }
.fy { background: linear-gradient(90deg, #777, #8b8b8b 60%, #aaa); color: #444; }
.fx { background: #fbdd7c; }
.mv { width: 22px; height: 20px; border: 1px solid #4471ad; border-radius: 3px; background: #8fbdf0; display: flex; align-items: center; justify-content: center; }
.mv.pale { border-color: #bcd3ea; background: #cfe3f8; }
.partial { margin: 9px -10px 0 44px; }
.plots-row { grid-template-columns: repeat(3, 41px); justify-content: center; padding: 8px 0 9px; }
.pointer { position: absolute; left: 653px; top: 326px; pointer-events: none; }
```
